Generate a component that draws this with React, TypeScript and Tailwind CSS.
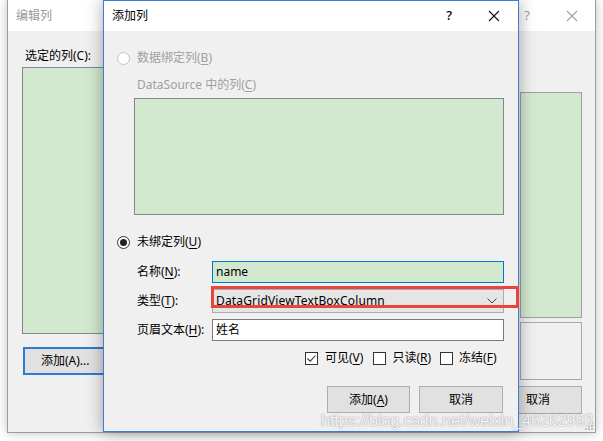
import React from "react";

const font = { fontFamily: '"Noto Sans", "Noto Sans CJK SC", sans-serif' };

function U({ c }: { c: string }) {
  return <span className="underline underline-offset-2">{c}</span>;
}

function XIcon({ color }: { color: string }) {
  return (
    <svg width="12" height="12" viewBox="0 0 12 12">
      <path d="M1 1 L11 11 M11 1 L1 11" stroke={color} strokeWidth="1.1" />
    </svg>
  );
}

function Radio({ checked, disabled }: { checked?: boolean; disabled?: boolean }) {
  return (
    <div
      className={
        "w-[13px] h-[13px] rounded-full border flex items-center justify-center bg-white " +
        (disabled ? "border-[#c2c2c2]" : "border-[#333]")
      }
    >
      {checked && <div className="w-[7px] h-[7px] rounded-full bg-[#222]" />}
    </div>
  );
}

function Check({ checked }: { checked?: boolean }) {
  return (
    <div className="w-[13px] h-[13px] border border-[#333] bg-white flex items-center justify-center">
      {checked && (
        <svg width="11" height="11" viewBox="0 0 11 11">
          <path d="M1.5 5.5 L4.2 8.2 L9.5 2.5" stroke="#333" strokeWidth="1.1" fill="none" />
        </svg>
      )}
    </div>
  );
}

export default function App() {
  return (
    <div className="relative w-[603px] h-[441px] overflow-hidden bg-white text-[12px] text-black" style={font}>
      {/* Background window: 编辑列 */}
      <div className="absolute left-[7px] top-[-1px] w-[589px] h-[434px] border border-[#9c9c9c] bg-[#f0f0f0] shadow-[0_0_10px_rgba(0,0,0,0.25)] flex flex-col">
        <div className="h-[31px] bg-white flex items-center pl-[8px] pr-[17px] shrink-0">
          <span className="text-[#9a9a9a] text-[12px]">编辑列</span>
          <div className="flex-1" />
          <span className="text-[#a0a0a0] text-[13px] mr-[36px]">?</span>
          <XIcon color="#a0a0a0" />
        </div>
        <div className="flex-1 flex justify-between pl-[14px] pr-[13px] relative">
          <div className="flex flex-col w-[200px]">
            <div className="mt-[16px] ml-[3px] h-[17px] leading-[17px]">选定的列(C):</div>
            <div className="mt-[3px] h-[267px] border border-[#828790] bg-[#d3e9cf]" />
            <div className="mt-[13px] ml-[1px] w-[110px] h-[28px] border-2 border-[#2f7ad2] bg-[#e1e1e1] flex items-center pl-[16px]">
              添加(A)...
            </div>
          </div>
          <div className="flex flex-col items-end w-[90px]">
            <div className="mt-[61px] w-[62px] h-[226px] border border-[#a0a0a0] bg-[#d3e9cf]" />
            <div className="mt-[4px] w-[62px] h-[58px] border border-[#a8a8a8] bg-[#f0f0f0]" />
            <div className="mt-[6px] w-[88px] h-[28px] border border-[#adadad] bg-[#e1e1e1] flex items-center justify-center">
              取消
            </div>
          </div>
          <div className="absolute right-[2px] bottom-[2px] grid grid-cols-3 gap-[1px]">
            {[0, 0, 1, 0, 1, 1, 1, 1, 1].map((v, i) => (
              <div key={i} className={"w-[2px] h-[2px] " + (v ? "bg-[#bdbdbd]" : "bg-transparent")} />
            ))}
          </div>
        </div>
      </div>

      {/* Front window: 添加列 */}
      <div className="absolute left-[103px] top-0 w-[416px] h-[432px] border border-[#3b7ed3] bg-[#f0f0f0] shadow-[0_0_16px_rgba(0,0,0,0.35)] flex flex-col">
        <div className="h-[30px] bg-white flex items-center pl-[8px] pr-[18px] shrink-0">
          <span className="text-[12px]">添加列</span>
          <div className="flex-1" />
          <span className="text-[13px] font-medium mr-[36px]">?</span>
          <XIcon color="#111" />
        </div>
        <div className="flex flex-col pl-[13px] pr-[14px]">
          <div className="mt-[19px] h-[16px] flex items-center gap-[7px] text-[#a0a0a0]">
            <Radio disabled />
            <span>
              数据绑定列(<U c="B" />)
            </span>
          </div>
          <div className="mt-[11px] ml-[20px] h-[16px] leading-[16px] text-[#a0a0a0]">
            DataSource 中的列(<U c="C" />)
          </div>
          <div className="mt-[5px] ml-[17px] w-[370px] h-[117px] border border-[#828790] bg-[#d3e9cf]" />
          <div className="mt-[19px] h-[16px] flex items-center gap-[7px]">
            <Radio checked />
            <span>
              未绑定列(<U c="U" />)
            </span>
          </div>
          <div className="mt-[11px] ml-[20px] flex items-center h-[22px]">
            <span className="w-[75px]">
              名称(<U c="N" />):
            </span>
            <div className="w-[292px] h-[22px] border border-[#0078d7] bg-[#d3e9cf] flex items-center pl-[3px]">
              name
            </div>
          </div>
          <div className="mt-[6px] ml-[20px] flex items-center h-[24px]">
            <span className="w-[75px]">
              类型(<U c="T" />):
            </span>
            <div className="w-[292px] h-[24px] border border-[#acacac] bg-[#e5e5e5] flex items-center pl-[3px] pr-[6px]">
              <span className="flex-1 tracking-[0.15px]">DataGridViewTextBoxColumn</span>
              <svg width="10" height="6" viewBox="0 0 10 6">
                <path d="M0.5 0.5 L5 5 L9.5 0.5" stroke="#444" strokeWidth="1" fill="none" />
              </svg>
            </div>
          </div>
          <div className="mt-[6px] ml-[20px] flex items-center h-[22px]">
            <span className="w-[75px]">
              页眉文本(<U c="H" />):
            </span>
            <div className="w-[292px] h-[22px] border border-[#7a7a7a] bg-white flex items-center pl-[3px]">
              姓名
            </div>
          </div>
          <div className="mt-[9px] ml-[188px] h-[16px] flex items-center">
            <Check checked />
            <span className="ml-[7px]">
              可见(<U c="V" />)
            </span>
            <div className="ml-[10px]">
              <Check />
            </div>
            <span className="ml-[6px]">
              只读(<U c="R" />)
            </span>
            <div className="ml-[9px]">
              <Check />
            </div>
            <span className="ml-[6px]">
              冻结(<U c="F" />)
            </span>
          </div>
          <div className="mt-[20px] flex justify-end gap-[9px] pr-[1px]">
            <div className="w-[83px] h-[27px] border border-[#adadad] bg-[#e1e1e1] flex items-center justify-center">
              <span>
                添加(<U c="A" />)
              </span>
            </div>
            <div className="w-[84px] h-[27px] border border-[#adadad] bg-[#e1e1e1] flex items-center justify-center">
              取消
            </div>
          </div>
        </div>
      </div>

      {/* Red annotation box */}
      <div className="absolute left-[211px] top-[286px] w-[308px] h-[22px] border-[3px] border-[#e8463d]" />

      {/* Watermark */}
      <div
        className="absolute left-[321px] top-[409px] text-[16px] text-white/90 [text-shadow:0_0_1.5px_rgba(0,0,0,0.5)] whitespace-nowrap"
        style={{ fontFamily: '"Liberation Sans", Arial, sans-serif' }}
      >
        https://blog.csdn.net/weixin_46262993
      </div>
    </div>
  );
}
